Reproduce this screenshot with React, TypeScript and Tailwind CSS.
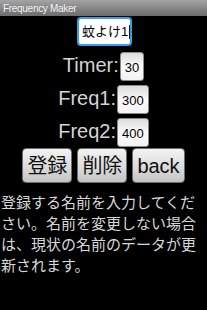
import React from 'react'

const font = { fontFamily: '"Liberation Sans", "Noto Sans CJK JP", sans-serif' }

function NumBox({ value }: { value: string }) {
  return (
    <div className="flex h-[29px] items-center rounded-[3px] border border-[#8a8a8a] bg-gradient-to-b from-[#dcdcdc] via-[#fafafa] to-[#f2f2f2] px-[4px] pt-[2px] text-[13px] text-black">
      {value}
    </div>
  )
}

function Row({ label, value }: { label: string; value: string }) {
  return (
    <div className="flex items-center justify-center gap-[1px]">
      <span className="-mt-[4px] text-[20px] leading-[20px] text-[#d4d4d4]">{label}</span>
      <NumBox value={value} />
    </div>
  )
}

function Btn({ label }: { label: string }) {
  return (
    <button className="h-[35px] rounded-[4px] border border-[#6e6e6e] bg-gradient-to-b from-[#f2f2f2] via-[#dedede] to-[#c4c4c4] px-[4px] text-[20px] leading-none text-[#111]">
      {label}
    </button>
  )
}

export default function App() {
  return (
    <div className="h-[310px] w-[207px] overflow-hidden bg-black" style={font}>
      <div className="flex h-[16px] items-center bg-gradient-to-b from-[#a4a4a4] to-[#6c6c6c] pl-[3px] text-[10px] tracking-[-0.3px] text-[#f2f2f2]">
        Frequency Maker
      </div>

      <div className="mt-[1px] flex justify-center pl-[2px]">
        <div className="flex h-[29px] w-[55px] shrink-0 items-center whitespace-nowrap rounded-[4px] border-2 border-[#2ea4e8] bg-white pl-[3px] text-[13px] text-black">
          蚊よけ1<span className="ml-[1px] h-[14px] w-[1px] shrink-0 bg-black" />
        </div>
      </div>

      <div className="mt-[6px] flex flex-col gap-[4px]">
        <Row label="Timer:" value="30" />
        <Row label="Freq1:" value="300" />
        <Row label="Freq2:" value="400" />
      </div>

      <div className="mt-[1px] flex justify-center gap-[5px]">
        <Btn label="登録" />
        <Btn label="削除" />
        <Btn label="back" />
      </div>

      <p className="mt-[9px] pl-[1px] text-[15px] leading-[21px] text-[#d8d8d8]">
        登録する名前を入力してください。名前を変更しない場合は、現状の名前のデータが更新されます。
      </p>
    </div>
  )
}
